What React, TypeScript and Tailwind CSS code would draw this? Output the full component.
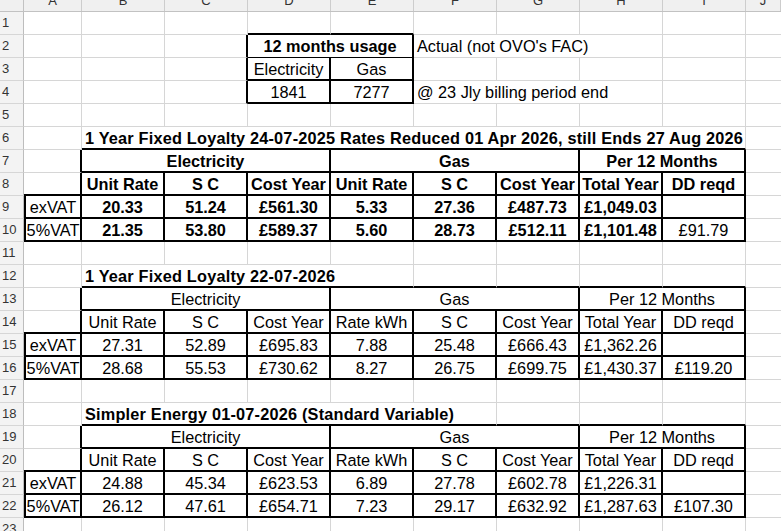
import React from 'react';

type Edge = 'g' | 'k' | 't';
type W = 'a' | 'j' | 1 | 2 | 3 | 4 | 5 | 8;

interface Cell {
  w: W;
  text?: string;
  bold?: boolean;
  left?: boolean;
  title?: boolean;
  l?: boolean;
  r?: Edge;
  b?: Edge;
}

const WIDTH: Record<string, string> = {
  a: 'w-[58px]',
  j: 'flex-1',
  1: 'w-[83px]',
  2: 'w-[166px]',
  3: 'w-[249px]',
  4: 'w-[332px]',
  5: 'w-[415px]',
  8: 'w-[664px]',
};

const RIGHT: Record<Edge, string> = {
  g: 'border-r border-r-[#d6d6d6]',
  k: 'border-r-2 border-r-black',
  t: 'border-r border-r-black',
};

const BOTTOM: Record<Edge, string> = {
  g: 'border-b border-b-[#d6d6d6]',
  k: 'border-b-2 border-b-black',
  t: 'border-b border-b-black',
};

const LETTERS = ['A', 'B', 'C', 'D', 'E', 'F', 'G', 'H', 'I', 'J'];

const blank = (n: number, extra: Partial<Cell> = {}): Cell[] =>
  Array.from({ length: n }, () => ({ w: 1 as W, ...extra }));

const emptyRow = (): Cell[] => [{ w: 'a' }, ...blank(8), { w: 'j' }];

function tableRows(
  title: string,
  titleSpan: 4 | 5 | 8,
  heads: string[],
  data: string[][],
  bold: boolean
): Cell[][] {
  const titleRow: Cell[] = [
    { w: 'a' },
    { w: titleSpan, text: title, bold: true, left: true, title: true, b: 'k' },
    ...blank(8 - titleSpan, { b: 'k' }),
    { w: 'j' },
  ];
  const groupRow: Cell[] = [
    { w: 'a', r: 'k' },
    { w: 3, text: 'Electricity', bold, r: 'k', b: 'k' },
    { w: 3, text: 'Gas', bold, r: 'k', b: 'k' },
    { w: 2, text: 'Per 12 Months', bold, r: 'k', b: 'k' },
    { w: 'j' },
  ];
  const headRow: Cell[] = [
    { w: 'a', r: 'k', b: 'k' },
    ...heads.map((h): Cell => ({ w: 1, text: h, bold, r: 'k', b: 'k' })),
    { w: 'j' },
  ];
  const dataRows = data.map(([label, ...vals]): Cell[] => [
    { w: 'a', text: label, l: true, r: 'k', b: 'k' },
    ...vals.map((v, i): Cell => ({ w: 1, text: v, bold: bold && i < 7, r: 'k', b: 'k' })),
    { w: 'j' },
  ]);
  return [titleRow, groupRow, headRow, ...dataRows];
}

const rows: Cell[][] = [
  // 1
  [{ w: 'a' }, ...blank(2), ...blank(2, { b: 'k' }), ...blank(4), { w: 'j' }],
  // 2
  [
    { w: 'a' },
    { w: 1 },
    { w: 1, r: 'k' },
    { w: 2, text: '12 months usage', bold: true, r: 'k', b: 't' },
    { w: 3, text: "Actual (not OVO's FAC)", left: true },
    { w: 1 },
    { w: 'j' },
  ],
  // 3
  [
    { w: 'a' },
    { w: 1 },
    { w: 1, r: 'k' },
    { w: 1, text: 'Electricity', r: 'k', b: 'k' },
    { w: 1, text: 'Gas', r: 'k', b: 'k' },
    ...blank(4),
    { w: 'j' },
  ],
  // 4
  [
    { w: 'a' },
    { w: 1 },
    { w: 1, r: 'k' },
    { w: 1, text: '1841', r: 'k', b: 'k' },
    { w: 1, text: '7277', r: 'k', b: 'k' },
    { w: 3, text: '@ 23 Jly billing period end', left: true },
    { w: 1 },
    { w: 'j' },
  ],
  // 5
  emptyRow(),
  // 6 - 10
  ...tableRows(
    '1 Year Fixed Loyalty 24-07-2025 Rates Reduced 01 Apr 2026, still Ends 27 Aug 2026',
    8,
    ['Unit Rate', 'S C', 'Cost Year', 'Unit Rate', 'S C', 'Cost Year', 'Total Year', 'DD reqd'],
    [
      ['exVAT', '20.33', '51.24', '£561.30', '5.33', '27.36', '£487.73', '£1,049.03', ''],
      ['5%VAT', '21.35', '53.80', '£589.37', '5.60', '28.73', '£512.11', '£1,101.48', '£91.79'],
    ],
    true
  ),
  // 11
  emptyRow(),
  // 12 - 16
  ...tableRows(
    '1 Year Fixed Loyalty 22-07-2026',
    4,
    ['Unit Rate', 'S C', 'Cost Year', 'Rate kWh', 'S C', 'Cost Year', 'Total Year', 'DD reqd'],
    [
      ['exVAT', '27.31', '52.89', '£695.83', '7.88', '25.48', '£666.43', '£1,362.26', ''],
      ['5%VAT', '28.68', '55.53', '£730.62', '8.27', '26.75', '£699.75', '£1,430.37', '£119.20'],
    ],
    false
  ),
  // 17
  emptyRow(),
  // 18 - 22
  ...tableRows(
    'Simpler Energy 01-07-2026 (Standard Variable)',
    5,
    ['Unit Rate', 'S C', 'Cost Year', 'Rate kWh', 'S C', 'Cost Year', 'Total Year', 'DD reqd'],
    [
      ['exVAT', '24.88', '45.34', '£623.53', '6.89', '27.78', '£602.78', '£1,226.31', ''],
      ['5%VAT', '26.12', '47.61', '£654.71', '7.23', '29.17', '£632.92', '£1,287.63', '£107.30'],
    ],
    false
  ),
  // 23
  emptyRow(),
];

const SheetCell: React.FC<{ cell: Cell }> = ({ cell }) => {
  const r: Edge = cell.r ?? 'g';
  const b: Edge = cell.b ?? 'g';
  const isJ = cell.w === 'j';
  return (
    <div
      className={`${WIDTH[String(cell.w)]} h-full shrink-0 flex items-center whitespace-nowrap overflow-visible ${
        isJ ? '' : RIGHT[r]
      } ${BOTTOM[b]} ${cell.l ? 'border-l-2 border-l-black' : ''} ${
        cell.left ? 'justify-start pl-[3px]' : 'justify-center'
      } ${cell.bold ? 'font-bold' : 'font-normal'} ${cell.title ? 'tracking-[0.2px]' : ''}`}
    >
      {cell.text}
    </div>
  );
};

export default function App() {
  return (
    <div className="w-[781px] h-[531px] overflow-hidden bg-white text-black font-['Liberation_Sans',Arial,sans-serif]">
      {/* column letters, clipped at the top like the sheet */}
      <div className="flex h-[12px] bg-[#f0f0f0] border-b border-b-[#c2c2c2] overflow-hidden text-[13px] text-[#333]">
        <div className="w-[24px] shrink-0 border-r border-r-[#c2c2c2]" />
        {LETTERS.map((l, i) => (
          <div
            key={l}
            className={`${i === 0 ? 'w-[58px]' : i === 9 ? 'flex-1' : 'w-[83px]'} shrink-0 flex justify-center border-r border-r-[#cdcdcd]`}
          >
            <span className="block leading-[13px] -mt-[6px]">{l}</span>
          </div>
        ))}
      </div>

      {rows.map((row, ri) => (
        <div key={ri} className="flex h-[23px] text-[16.3px] leading-[18px]">
          <div className="w-[24px] shrink-0 flex items-center pl-[2px] bg-[#f3f3f3] border-r border-r-[#bdbdbd] border-b border-b-[#d6d6d6] text-[13px] text-[#333]">
            {ri + 1}
          </div>
          {row.map((cell, ci) => (
            <SheetCell key={ci} cell={cell} />
          ))}
        </div>
      ))}
    </div>
  );
}
